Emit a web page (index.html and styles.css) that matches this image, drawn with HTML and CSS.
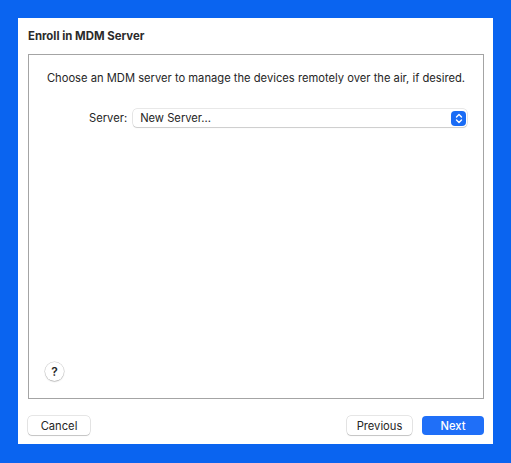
FILE: index.html
```html
<!DOCTYPE html>
<html lang="en">
<head>
  <meta charset="UTF-8" />
  <title>Enroll in MDM Server</title>
  <link rel="stylesheet" href="styles.css">
</head>
<body>
  <div class="sheet">
    <h1>Enroll in MDM Server</h1>

    <div class="panel">
      <p class="intro">Choose an MDM server to manage the devices remotely over the air, if desired.</p>

      <div class="row">
        <span class="label">Server:</span>
        <div class="popup">
          <span>New Server...</span>
          <span class="stepper">
            <svg width="8" height="11" viewBox="0 0 8 11">
              <path d="M1.5 4 L4 1.5 L6.5 4 M1.5 7 L4 9.5 L6.5 7" fill="none" stroke="#fff" stroke-width="1.4" stroke-linecap="round" stroke-linejoin="round"/>
            </svg>
          </span>
        </div>
      </div>

      <div class="help">?</div>
    </div>

    <div class="buttons">
      <button class="btn">Cancel</button>
      <div class="right">
        <button class="btn">Previous</button>
        <button class="btn primary">Next</button>
      </div>
    </div>
  </div>
</body>
</html>
```

FILE: styles.css
```css
body {
  margin: 0;
  background: #0a64f0;
  font-family: Inter, 'Liberation Sans', sans-serif;
  color: #262626;
  padding: 18px;
  height: 463px;
  box-sizing: border-box;
}
.sheet {
  background: #fff;
  width: 475px;
  height: 426px;
  box-sizing: border-box;
  padding: 11px 9px 0 10px;
  display: flex;
  flex-direction: column;
}
h1 {
  font-size: 11.4px;
  font-weight: 700;
  margin: 0 0 11px 0;
  line-height: 14px;
  color: #2b2b2b;
}
.panel {
  border: 1px solid #a4a4a4;
  height: 345px;
  box-sizing: border-box;
  display: flex;
  flex-direction: column;
  padding: 16px 16px 17px 16px;
}
.intro {
  margin: 0;
  font-size: 11.2px;
  line-height: 14px;
  text-align: center;
  white-space: nowrap;
}
.row {
  display: flex;
  align-items: center;
  margin-top: 24px;
  padding-left: 44px;
}
.label {
  font-size: 11.2px;
  margin-right: 6px;
}
.popup {
  flex: 1;
  height: 18px;
  border-radius: 4px;
  box-shadow: 0 0 0 0.5px rgba(0,0,0,0.18), 0 1px 1px rgba(0,0,0,0.12);
  display: flex;
  align-items: center;
  justify-content: space-between;
  padding-left: 7px;
  padding-right: 1px;
  font-size: 11.2px;
}
.stepper {
  width: 15px;
  height: 15px;
  background: #1a6cf5;
  border-radius: 4px;
  display: flex;
  align-items: center;
  justify-content: center;
}
.help {
  margin-top: auto;
  width: 19px;
  height: 19px;
  border-radius: 50%;
  box-shadow: 0 0 0 0.5px rgba(0,0,0,0.2), 0 1px 1.5px rgba(0,0,0,0.15);
  font-size: 12px;
  font-weight: 600;
  display: flex;
  align-items: center;
  justify-content: center;
}
.buttons {
  display: flex;
  justify-content: space-between;
  margin-top: 17px;
}
.right {
  display: flex;
  gap: 10px;
}
.btn {
  font-family: Inter, 'Liberation Sans', sans-serif;
  font-size: 11.2px;
  height: 19px;
  padding: 0;
  border: none;
  border-radius: 4px;
  background: #fff;
  color: #262626;
  box-shadow: 0 0 0 0.5px rgba(0,0,0,0.2), 0 1px 1px rgba(0,0,0,0.15);
  width: 62px;
}
.right .btn:first-child { width: 65px; }
.btn.primary {
  background: #1f6ff8;
  color: #fff;
  font-weight: 500;
  box-shadow: none;
}
```
